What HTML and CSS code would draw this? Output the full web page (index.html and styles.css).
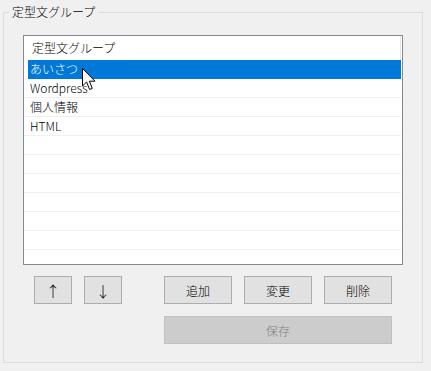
FILE: index.html
```html
<!DOCTYPE html>
<html lang="ja">
<head>
    <meta charset="UTF-8">
    <meta name="viewport" content="width=device-width, initial-scale=1.0">
    <title>定型文グループ</title>
    <link rel="stylesheet" href="styles.css">
</head>
<body>
    <fieldset class="group">
        <legend>定型文グループ</legend>
        <div class="group-body">
            <div class="list">
                <div class="list-header">定型文グループ</div>
                <div class="row selected"><span>あいさつ</span></div>
                <div class="row"><span>Wordpress</span></div>
                <div class="row"><span>個人情報</span></div>
                <div class="row"><span>HTML</span></div>
                <div class="row"></div>
                <div class="row"></div>
                <div class="row"></div>
                <div class="row"></div>
                <div class="row"></div>
                <div class="row"></div>
                <svg class="cursor" width="15" height="23" viewBox="0 0 15 23">
                    <path d="M0.5 0.5 L0.5 18 L4.6 14 L7.6 21.5 L10.3 20.4 L7.4 13.2 L13 13.2 Z" fill="#fff" stroke="#000" stroke-width="1"/>
                </svg>
            </div>
            <div class="buttons">
                <button class="btn arrow">↑</button>
                <button class="btn arrow">↓</button>
                <span></span>
                <button class="btn">追加</button>
                <button class="btn">変更</button>
                <button class="btn">削除</button>
                <button class="btn save" disabled>保存</button>
            </div>
        </div>
    </fieldset>
</body>
</html>
```

FILE: styles.css
```css
body {
    margin: 0;
    background-color: #f0f0f0;
    font-family: "Noto Sans CJK JP", "Noto Sans", sans-serif;
    font-size: 12px;
    font-weight: 300;
    color: #000;
}
.group {
    box-sizing: border-box;
    width: 420px;
    margin: 4px 0 0 3px;
    padding: 0;
    border: 1px solid #dcdcdc;
}
.group legend {
    margin-left: 5px;
    padding: 0 3px;
    line-height: 16px;
}
.group-body {
    padding: 15px 19px 18px 19px;
}
.list {
    position: relative;
    box-sizing: border-box;
    width: 380px;
    height: 230px;
    background-color: #fff;
    border: 1px solid #828790;
    padding-right: 1px;
    overflow: hidden;
}
.list-header {
    height: 24px;
    line-height: 24px;
    padding-left: 8px;
    border-right: 1px solid #e5e5e5;
}
.row {
    height: 18px;
    line-height: 18px;
    border-bottom: 1px solid #f0f0f0;
}
.row span {
    display: block;
    margin-left: 4px;
    padding-left: 2px;
}
.row.selected {
    border-bottom-color: #fff;
}
.row.selected span {
    height: 19px;
    background-color: #0078d7;
    color: #fff;
}
.cursor {
    position: absolute;
    left: 58px;
    top: 32px;
}
.buttons {
    display: grid;
    grid-template-columns: 38px 38px 18px 68px 68px 68px;
    grid-auto-rows: 28px;
    column-gap: 12px;
    row-gap: 12px;
    margin: 11px 0 0 11px;
}
.btn {
    font-family: inherit;
    font-size: 12px;
    font-weight: 300;
    color: #000;
    background-color: #e1e1e1;
    border: 1px solid #adadad;
    padding: 0;
    margin: 0;
}
.btn.arrow {
    font-size: 15px;
}
.save {
    grid-column: 4 / 7;
    background-color: #cccccc;
    border-color: #bfbfbf;
    color: #838383;
}
```
